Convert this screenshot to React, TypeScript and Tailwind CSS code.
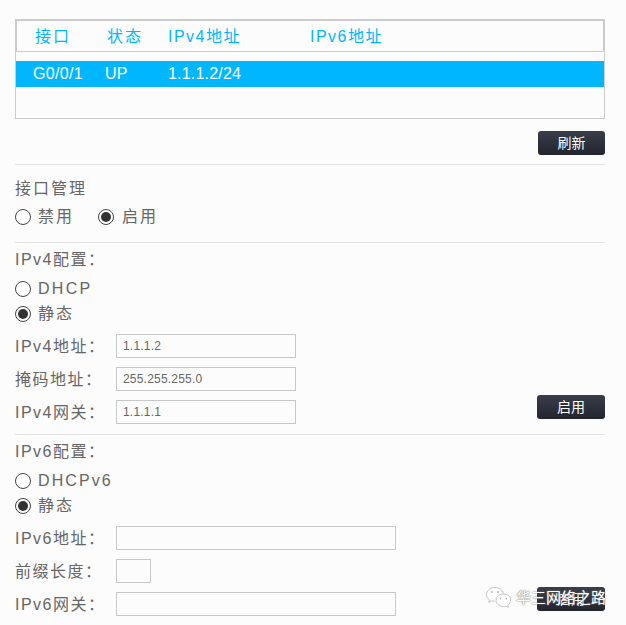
const font = '[font-family:"Liberation_Sans","Noto_Sans_CJK_SC",sans-serif]';

function Radio({ checked }: { checked?: boolean }) {
  return (
    <span className="flex h-4 w-4 shrink-0 items-center justify-center rounded-full border border-[#444] bg-white">
      {checked && <span className="h-[10px] w-[10px] rounded-full bg-[#333]" />}
    </span>
  );
}

function RadioRow({ label, checked, className }: { label: string; checked?: boolean; className: string }) {
  return (
    <div className={`flex items-center gap-[7px] text-[16px] text-[#666] ${className}`}>
      <Radio checked={checked} />
      <span>{label}</span>
    </div>
  );
}

function Field({ label, value, width, className }: { label: string; value?: string; width: string; className: string }) {
  return (
    <div className={`flex h-6 items-center ${className}`}>
      <span className="w-[101px] shrink-0 pt-[2px] text-[16px] tracking-[1.5px] text-[#666]">{label}</span>
      <input
        readOnly
        value={value ?? ''}
        className={`h-6 ${width} border border-[#c8c8c8] bg-[#fcfcfc] px-[6px] text-[12px] tracking-[0.2px] text-[#666] outline-none ${font}`}
      />
    </div>
  );
}

function DarkButton({ label, className }: { label: string; className: string }) {
  return (
    <button className={`h-6 rounded-[3px] bg-gradient-to-b from-[#3a3e49] to-[#22252e] text-[14px] text-white ${className}`}>
      {label}
    </button>
  );
}

function WechatMark() {
  return (
    <svg width="28" height="24" viewBox="0 0 28 24" fill="none" stroke="#c4c4c4" strokeWidth="1">
      <path d="M10 1.5C5 1.5 1.5 4.8 1.5 8.6c0 2.3 1.2 4 3 5.3l-.8 2.4 2.9-1.5c1 .3 2 .5 3.2.5" fill="#fff" />
      <path d="M10 1.5c4 0 7.6 2.4 8.2 5.8" />
      <path d="M18.5 8c-4.3 0-7.5 2.9-7.5 6.3s3.2 6.3 7.5 6.3c.9 0 1.7-.1 2.5-.4l2.4 1.3-.6-2.1c1.6-1.2 2.7-3 2.7-5.1C26.500 10.900 22.800 8 18.500 8Z" fill="#fff" />
      <circle cx="7" cy="6" r="1" fill="#bbb" stroke="none" />
      <circle cx="13" cy="6" r="1" fill="#bbb" stroke="none" />
      <circle cx="15.500" cy="12.500" r=".9" fill="#bbb" stroke="none" />
      <circle cx="21.500" cy="12.500" r=".9" fill="#bbb" stroke="none" />
    </svg>
  );
}

export default function App() {
  return (
    <div className={`relative h-[625px] w-[626px] overflow-hidden bg-[#fcfcfc] pl-[15px] pr-[21px] pt-[19px] ${font}`}>
      {/* interface table */}
      <div className="h-[100px] border border-[#cbcbcb]">
        <div className="-m-px flex h-[33px] items-center border-2 border-b border-[#cbcbcb] pt-[2px] text-[16px] text-[#00b7ff]">
          <span className="ml-[18px] w-[72px] tracking-[2px]">接口</span>
          <span className="w-[61px] tracking-[2px]">状态</span>
          <span className="w-[142px] tracking-[1.5px]">IPv4地址</span>
          <span className="tracking-[1.5px]">IPv6地址</span>
        </div>
        <div className="mt-[10px] flex h-[26px] items-center bg-[#00b7ff] text-[16px] text-white">
          <span className="ml-[17px] w-[72px] tracking-[0.3px]">G0/0/1</span>
          <span className="w-[63px] tracking-[0.3px]">UP</span>
          <span className="tracking-[0.2px]">1.1.1.2/24</span>
        </div>
      </div>

      <div className="mt-[12px] flex justify-end">
        <DarkButton label="刷新" className="w-[67px]" />
      </div>

      <div className="mt-[9px] border-t border-[#e3e3e3]" />
      <div className="mt-[12px] h-6 text-[16px] leading-6 tracking-[2px] text-[#666]">接口管理</div>
      <div className="mt-[4px] flex h-6 items-center">
        <RadioRow label="禁用" className="w-[83px] tracking-[2px]" />
        <RadioRow label="启用" checked className="tracking-[2px] [&>span:last-child]:ml-px" />
      </div>

      <div className="mt-[13px] border-t border-[#e3e3e3]" />
      <div className="mt-[5px] h-[23px] text-[16px] leading-6 tracking-[1.5px] text-[#666]">IPv4配置：</div>
      <RadioRow label="DHCP" className="mt-[6px] h-6 tracking-[2.3px]" />
      <RadioRow label="静态" checked className="mt-[1px] h-6 tracking-[2px]" />
      <Field label="IPv4地址：" value="1.1.1.2" width="w-[180px]" className="mt-[8px]" />
      <Field label="掩码地址：" value="255.255.255.0" width="w-[180px]" className="mt-[9px]" />
      <div className="mt-[9px] flex items-start justify-between">
        <Field label="IPv4网关：" value="1.1.1.1" width="w-[180px]" className="" />
        <DarkButton label="启用" className="-mt-[5px] w-[68px]" />
      </div>

      <div className="mt-[10px] border-t border-[#e3e3e3]" />
      <div className="mt-[5px] h-[23px] text-[16px] leading-6 tracking-[1.5px] text-[#666]">IPv6配置：</div>
      <RadioRow label="DHCPv6" className="mt-[6px] h-6 tracking-[2.1px]" />
      <RadioRow label="静态" checked className="mt-[1px] h-6 tracking-[2px]" />
      <Field label="IPv6地址：" width="w-[280px]" className="mt-[8px]" />
      <Field label="前缀长度：" width="w-[35px]" className="mt-[9px]" />
      <div className="mt-[9px] flex items-start justify-between">
        <Field label="IPv6网关：" width="w-[280px]" className="" />
        <DarkButton label="启用" className="-mt-[5px] w-[68px]" />
      </div>

      {/* watermark over the last button */}
      <div className="absolute left-[485px] top-[586px] flex items-center gap-[3px]">
        <WechatMark />
        <span className="text-[15px] text-white [text-shadow:0_0_2px_#777,0_0_1px_#777]">华三网络之路</span>
      </div>
    </div>
  );
}
